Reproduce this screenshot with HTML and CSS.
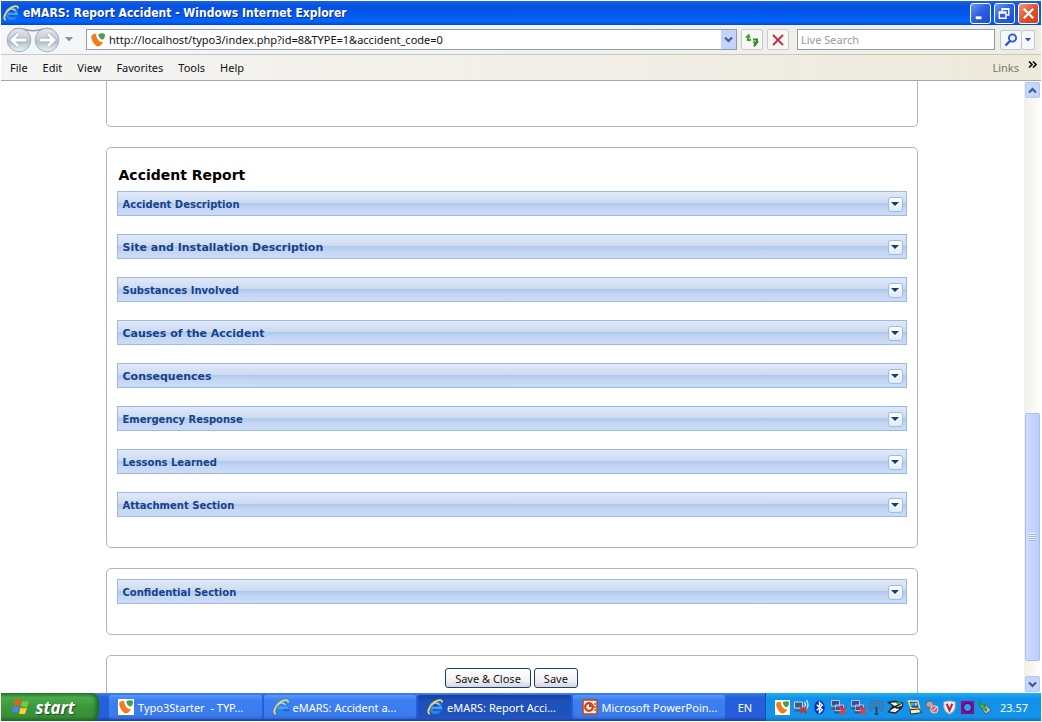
FILE: index.html
```html
<!DOCTYPE html>
<html lang="en">
<head>
<meta charset="utf-8">
<title>eMARS: Report Accident</title>
<link rel="stylesheet" href="styles.css">
</head>
<body>
<svg class="defs" aria-hidden="true">
  <defs>
    <linearGradient id="orb" x1="0" y1="0" x2="0" y2="1"><stop offset="0" stop-color="#e4e8ec"/><stop offset=".45" stop-color="#c6ced7"/><stop offset=".6" stop-color="#b4c2cf"/><stop offset="1" stop-color="#e2fafd"/></linearGradient>
    <symbol id="ie" viewBox="0 0 16 16">
      <circle cx="8.500" cy="8.500" r="5" fill="none" stroke="#2a86e2" stroke-width="3.200"/>
      <path d="M4.500 6.500A4.600 4.600 0 0 1 12.500 6" fill="none" stroke="#8ad4ff" stroke-width="1.500"/>
      <path d="M5 8.800h10" stroke="#4aa6f4" stroke-width="2.200"/>
      <path d="M10.500 10h6v2.200h-6z" fill="#1c62e0"/>
      <path d="M2.800 15C-.6 14 2.200 6.500 7.500 3c3.500-2.400 8-2.800 7.500.5" fill="none" stroke="#f6d75c" stroke-width="1.800"/>
    </symbol>
    <symbol id="typo" viewBox="0 0 16 16">
      <path d="M0 0h16v16H0z" fill="#fff"/>
      <path d="M2.500 2.500C.8 3.500.8 5.500 2 8c1.500 3.500 3.800 6.500 6 6.500 2.200 0 4.200-2.200 5-4.700C9.500 11 6.300 6.500 6 1.500z" fill="#f57c1c"/>
      <path d="M8.500 2c2-.8 6-1 6.300.2.500 1.700-.2 4.300-1.800 5.300C10.800 8 8 4.500 8.500 2z" fill="#4f9b52"/>
    </symbol>
    <symbol id="net" viewBox="0 0 16 16">
      <path d="M1 1.500h8v5.500H1zM5 6h8v5.500H5z" fill="#3c4f96" stroke="#b9c4dc"/>
      <path d="M1 9.500h4M4 13.500h6" stroke="#46506e" stroke-width="2"/>
      <path d="M9 8l6 7M15 8l-6 7" stroke="#e8383c" stroke-width="2.400"/>
    </symbol>
  </defs>
</svg>

<header class="titlebar">
  <svg class="icon16"><use href="#ie"/></svg>
  <h1 class="window-title">eMARS: Report Accident - Windows Internet Explorer</h1>
  <div class="window-buttons">
    <button class="winbtn" aria-label="Minimize"><svg viewBox="0 0 20 20"><path d="M5 14.500h6" stroke="#fff" stroke-width="3"/></svg></button>
    <button class="winbtn" aria-label="Restore"><svg viewBox="0 0 20 20"><path d="M7.500 8V5h7v6.500H12M7 5.500h8" fill="none" stroke="#fff" stroke-width="1.500"/><path d="M4.500 8.500h7v6.500h-7zM4 9.500h8" fill="none" stroke="#fff" stroke-width="1.500"/></svg></button>
    <button class="winbtn winbtn-close" aria-label="Close"><svg viewBox="0 0 20 20"><path d="M5 5l10 10M15 5L5 15" stroke="#fff" stroke-width="2.400"/></svg></button>
  </div>
</header>

<div class="navbar">
  <button class="orb-pair" aria-label="Back and forward">
    <svg viewBox="0 0 56 26" width="56" height="26">
      <path d="M8 3q4-2.500 10-1 10 3.500 20 0 6-1.500 10 1" fill="none" stroke="#8f9aa6" stroke-width="1.500"/>
      <circle cx="14" cy="13" r="11.800" fill="url(#orb)" stroke="#a3adb8"/>
      <circle cx="42" cy="13" r="11.800" fill="url(#orb)" stroke="#a3adb8"/>
      <path d="M13 7l-6 6 6 6M8 13h13M43 7l6 6-6 6M48 13H35" fill="none" stroke="#9fabb8" stroke-width="4.500"/>
      <path d="M13 7l-6 6 6 6M8 13h13M43 7l6 6-6 6M48 13H35" fill="none" stroke="#fff" stroke-width="2.800"/>
    </svg>
  </button>
  <button class="history" aria-label="Recent pages"><svg viewBox="0 0 8 5" width="8" height="5"><path d="M0 0h8L4 4.500z" fill="#8d9298"/></svg></button>
  <div class="address">
    <svg class="icon16"><use href="#typo"/></svg>
    <input class="address-input" aria-label="Address" value="http://localhost/typo3/index.php?id=8&amp;TYPE=1&amp;accident_code=0">
    <button class="drop" aria-label="Show addresses"><svg viewBox="0 0 9 7" width="9" height="7"><path d="M1 1.500l3.500 3.500L8 1.500" fill="none" stroke="#45608f" stroke-width="2.200"/></svg></button>
  </div>
  <button class="toolbtn" aria-label="Refresh"><svg viewBox="0 0 16 16" width="16" height="16"><path d="M1 5.500L5 1.500 6.500 6z" fill="#36a03a"/><path d="M4 4v4h3" fill="none" stroke="#36a03a" stroke-width="2.200"/><path d="M15 9.500L11.500 14 8.500 9.500z" fill="#2c8a34"/><path d="M9 7.500h4v3M11.500 12l-1.500 2.500" fill="none" stroke="#2c8a34" stroke-width="2"/></svg></button>
  <button class="toolbtn" aria-label="Stop"><svg viewBox="0 0 14 14" width="14" height="14"><path d="M2 2l10 10M12 2L2 12" stroke="#c02c40" stroke-width="1.800"/></svg></button>
  <input class="search" aria-label="Live Search" placeholder="Live Search">
  <div class="search-buttons">
    <button class="split" aria-label="Search"><svg viewBox="0 0 14 14" width="14" height="14"><circle cx="8.500" cy="5" r="3.600" fill="#e3efff" stroke="#2a56c6" stroke-width="1.800"/><path d="M6 8l-4.500 4.500" stroke="#2a56c6" stroke-width="2.400"/></svg></button>
    <button class="split split-drop" aria-label="Search options"><svg viewBox="0 0 6 4" width="6" height="4"><path d="M0 0h6L3 3.500z" fill="#2a56a6"/></svg></button>
  </div>
</div>

<nav class="menubar">
  <button class="menu">File</button>
  <button class="menu">Edit</button>
  <button class="menu">View</button>
  <button class="menu">Favorites</button>
  <button class="menu">Tools</button>
  <button class="menu">Help</button>
  <span class="links">Links</span>
  <button class="more" aria-label="More links"><svg viewBox="0 0 9 7" width="9" height="7"><path d="M1 .5l3 3-3 3M5 .5l3 3-3 3" fill="none" stroke="#111" stroke-width="1.700"/></svg></button>
</nav>

<div class="viewport">
  <main class="page">
    <section class="card card-tail"></section>

    <section class="card">
      <h2 class="card-title">Accident Report</h2>
      <div class="panels">
        <div class="panel"><h3 class="panel-title">Accident Description</h3><button class="toggle" aria-label="Expand Accident Description"></button></div>
        <div class="panel"><h3 class="panel-title panel-title-wide">Site and Installation Description</h3><button class="toggle" aria-label="Expand Site and Installation Description"></button></div>
        <div class="panel"><h3 class="panel-title">Substances Involved</h3><button class="toggle" aria-label="Expand Substances Involved"></button></div>
        <div class="panel"><h3 class="panel-title panel-title-wide">Causes of the Accident</h3><button class="toggle" aria-label="Expand Causes of the Accident"></button></div>
        <div class="panel"><h3 class="panel-title panel-title-wide">Consequences</h3><button class="toggle" aria-label="Expand Consequences"></button></div>
        <div class="panel"><h3 class="panel-title">Emergency Response</h3><button class="toggle" aria-label="Expand Emergency Response"></button></div>
        <div class="panel"><h3 class="panel-title">Lessons Learned</h3><button class="toggle" aria-label="Expand Lessons Learned"></button></div>
        <div class="panel"><h3 class="panel-title">Attachment Section</h3><button class="toggle" aria-label="Expand Attachment Section"></button></div>
      </div>
    </section>

    <section class="card">
      <div class="panel"><h3 class="panel-title">Confidential Section</h3><button class="toggle" aria-label="Expand Confidential Section"></button></div>
    </section>

    <section class="card card-actions">
      <button class="action">Save &amp; Close</button>
      <button class="action">Save</button>
    </section>
  </main>

  <div class="scrollbar">
    <button class="scroll-arrow" aria-label="Scroll up"><svg viewBox="0 0 9 7" width="9" height="7"><path d="M1 5.500L4.500 2 8 5.500" fill="none" stroke="#3f5a91" stroke-width="2.200"/></svg></button>
    <div class="scroll-track"><div class="scroll-thumb"><span class="grip"></span></div></div>
    <button class="scroll-arrow" aria-label="Scroll down"><svg viewBox="0 0 9 7" width="9" height="7"><path d="M1 1.500L4.500 5 8 1.500" fill="none" stroke="#3f5a91" stroke-width="2.200"/></svg></button>
  </div>
</div>

<footer class="taskbar">
  <button class="start">
    <svg viewBox="0 0 20 18" width="20" height="18">
      <path d="M4 2q3-1.500 6 .3L8.500 8q-3-1.500-6 0z" fill="#ee5a28"/>
      <path d="M11 2.800q3 1.500 7 .2l-1.700 5.500q-3 1.200-6.500-.2z" fill="#7cc83c"/>
      <path d="M2.200 9q3-1.500 6 0l-1.600 6q-3-1.500-6 0z" fill="#4a86ee"/>
      <path d="M9.500 9.400q3 1.500 6.500.2l-1.700 6q-3.200 1.200-6.400-.2z" fill="#fbcf38"/>
    </svg>
    <span>start</span>
  </button>
  <div class="tasks">
    <button class="task"><svg class="icon16"><use href="#typo"/></svg><span>Typo3Starter&nbsp; - TYP...</span></button>
    <button class="task"><svg class="icon16"><use href="#ie"/></svg><span>eMARS: Accident a...</span></button>
    <button class="task task-active"><svg class="icon16"><use href="#ie"/></svg><span>eMARS: Report Acci...</span></button>
    <button class="task"><svg class="icon16" viewBox="0 0 16 16"><path d="M1 1h14v14H1z" fill="#fff2e4" stroke="#b8431d" stroke-width="1.500"/><circle cx="7" cy="8" r="3.800" fill="none" stroke="#c8401a" stroke-width="2.200"/><path d="M7 8V4l4 4z" fill="#b8431d"/><path d="M13 4v9" stroke="#c8501c" stroke-width="1.500" stroke-dasharray="2 1"/></svg><span>Microsoft PowerPoin...</span></button>
  </div>
  <button class="lang">EN</button>
  <div class="tray">
    <svg class="tray-icon"><use href="#typo"/></svg>
    <svg class="tray-icon tray-wide" viewBox="0 0 16 16"><path d="M1 3h8v6H1z" fill="#4a5878" stroke="#ccd6e8"/><path d="M1 11.500h8" stroke="#50586e" stroke-width="2"/><path d="M11 3q2 3 0 6M13 1q3 5 0 9" fill="none" stroke="#e4eefa" stroke-width="1.300"/><path d="M7 8l6 6M13 8l-6 6" stroke="#d02c2c" stroke-width="2"/></svg>
    <svg class="tray-icon" viewBox="0 0 16 16"><ellipse cx="8" cy="8" rx="5.500" ry="7.500" fill="#0a2cc0"/><path d="M5 5l6 5.500L8 13.500V2.500l3 3L5 11" fill="none" stroke="#fff" stroke-width="1.500"/></svg>
    <svg class="tray-icon tray-wide"><use href="#net"/></svg>
    <svg class="tray-icon tray-wide"><use href="#net"/></svg>
    <svg class="tray-icon" viewBox="0 0 16 16"><path d="M3 12A7 7 0 1 1 13 12M5.500 9.500A3.500 3.500 0 1 1 10.500 9.500" fill="none" stroke="#5a6c88" stroke-width="1.500"/><path d="M8 7v8M6 15h4" stroke="#26405e" stroke-width="2"/></svg>
    <svg class="tray-icon tray-wide" viewBox="0 0 16 16"><path d="M1 3.500l6-1 8 1.500v3l-6 2zM1 13l4-5 9 1-6 5z" fill="#f4f4f0" stroke="#222" stroke-width="1.300"/><path d="M3 10l10-5" stroke="#222" stroke-width="1.500"/><path d="M9 4h4" stroke="#35a03f" stroke-width="2"/></svg>
    <svg class="tray-icon" viewBox="0 0 16 16"><path d="M1.500 1h10l2 8h-9z" fill="#3046b0" stroke="#f0e67c" stroke-width="1.500"/><path d="M4 3h3v3H4z" fill="#58c65a"/><path d="M8 3h3v3H8z" fill="#8ad6f1"/><path d="M3 10.500l10-1 2.500 4-11.500 1.500z" fill="#f3eec4" stroke="#222"/></svg>
    <svg class="tray-icon" viewBox="0 0 16 16"><circle cx="6" cy="5" r="4" fill="#b5aaa5" stroke="#6e5555"/><path d="M3 8q6-1 7 6" fill="none" stroke="#866" stroke-width="2"/><circle cx="11" cy="10" r="4" fill="#c87068" stroke="#f3dad5"/><path d="M9 12l5-5" stroke="#fff"/></svg>
    <svg class="tray-icon" viewBox="0 0 16 16"><path d="M2 2q6-2 12 0v6q-1 5-6 7-5-2-6-7z" fill="#f4f2f4" stroke="#aaa"/><path d="M5 4l3 7 3-7" fill="none" stroke="#d0202c" stroke-width="2.200"/></svg>
    <svg class="tray-icon" viewBox="0 0 16 16"><path d="M1 1h14v14H1z" fill="#84108c"/><circle cx="8" cy="8" r="4.500" fill="#2a9ef0" stroke="#5a0a70" stroke-width="1.500"/></svg>
    <svg class="tray-icon" viewBox="0 0 16 16"><path d="M4 8l6-2 5 5-6 4z" fill="#b9c6c4" stroke="#456"/><path d="M2 1l2 7 6 4v-3L7 7l2-3-4 1z" fill="#4cc048" stroke="#248627"/></svg>
    <span class="clock">23.57</span>
  </div>
</footer>
</body>
</html>
```
FILE: styles.css
```css
* { box-sizing: border-box; }

body {
  margin: 0;
  height: 100vh;
  padding: 1px;
  display: flex;
  flex-direction: column;
  background: #fff;
  color: #111;
  font: 11px "Noto Sans", Tahoma, sans-serif;
  overflow: hidden;
}

button, input { font: inherit; color: inherit; margin: 0; padding: 0; }
button { border: 0; background: none; display: flex; align-items: center; justify-content: center; }
h1, h2, h3 { margin: 0; }

.defs { position: absolute; width: 0; height: 0; }
.icon16 { width: 16px; height: 16px; flex: none; }

.titlebar {
  height: 24px;
  flex: none;
  display: flex;
  align-items: center;
  gap: 4px;
  padding: 0 2px;
  background: linear-gradient(#1c62e2, #0550e0 20%, #0458ee 55%, #0565fb 85%, #0347c8);
}
.window-title {
  flex: 1;
  font: bold 12px "DejaVu Sans Condensed", "Noto Sans", sans-serif;
  color: #fff;
  text-shadow: 1px 1px #0a2c86;
}
.window-buttons { display: flex; gap: 3px; }
.winbtn {
  width: 21px;
  height: 21px;
  border: 1px solid #fff;
  border-radius: 3px;
  background: linear-gradient(135deg, #6c96f4, #2a5ee0 50%, #1c4fd0);
}
.winbtn-close { background: linear-gradient(135deg, #f09a80, #e2512c 50%, #d03c14); }

.navbar {
  height: 30px;
  flex: none;
  display: flex;
  align-items: center;
  padding: 0 6px 0 4px;
  background: linear-gradient(90deg, #f5f6f8, #efede2);
  border-bottom: 1px solid #c9c8c0;
}
.orb-pair { width: 56px; height: 26px; }
.history { width: 16px; height: 20px; margin-right: 9px; }
.address {
  flex: 1;
  height: 21px;
  display: flex;
  align-items: center;
  gap: 3px;
  padding-left: 3px;
  background: #fff;
  border: 1px solid #8d9db5;
}
.address-input { flex: 1; min-width: 0; border: 0; outline: 0; background: none; }
.drop { width: 15px; height: 19px; background: #c3d3fb; }
.toolbtn {
  width: 22px;
  height: 21px;
  margin-left: 4px;
  border: 1px solid #c3ccd6;
  border-radius: 2px;
  background: #f7f7f3;
}
.search {
  width: 198px;
  height: 21px;
  margin-left: 8px;
  padding: 0 3px;
  border: 1px solid #8d9db5;
  background: #fff;
}
.search::placeholder { color: #999; opacity: 1; }
.search-buttons { display: flex; margin-left: 5px; }
.split { width: 22px; height: 20px; border: 1px solid #b8c6dc; border-radius: 2px; background: #f6f8fb; }
.split-drop { width: 13px; border-left: 0; }

.menubar {
  height: 26px;
  flex: none;
  display: flex;
  align-items: center;
  gap: 15px;
  padding: 0 4px 0 9px;
  background: linear-gradient(90deg, #f4f4f4, #edeadb);
  border-bottom: 1px solid #aaa99f;
}
.links { margin-left: auto; color: #77766e; }
.more { align-self: flex-start; margin: 6px 0 0 -6px; }

.viewport { flex: 1; min-height: 0; display: flex; overflow: hidden; }
.page {
  flex: 1;
  min-width: 0;
  overflow: hidden;
  display: flex;
  flex-direction: column;
  align-items: center;
  gap: 20px;
  padding-right: 2px;
}
.card {
  width: 812px;
  max-width: 94%;
  flex: none;
  padding: 10px 10px 30px;
  border: 1px solid #b4b4b4;
  border-radius: 5px;
}
.card-tail { height: 46px; border-top: 0; border-radius: 0 0 5px 5px; }
.card-title {
  padding: 7px 2px 6px;
  font: bold 14px/20px "DejaVu Sans", Verdana, sans-serif;
  color: #000;
}
.panels { display: flex; flex-direction: column; gap: 18px; }
.panel {
  height: 25px;
  display: flex;
  align-items: center;
  justify-content: space-between;
  padding: 1px 3px 0 5px;
  border: 1px solid #99bbe8;
  background: linear-gradient(#e0e9f8, #cbdaf2 48%, #b2c9ec 50%, #c3d6f3 70%, #ccdcf7);
}
.panel-title { font: bold 10px "DejaVu Sans", Verdana, sans-serif; color: #15428b; }
.panel-title-wide { font-size: 11px; }
.toggle {
  width: 15px;
  height: 15px;
  border: 1px solid #9dbde0;
  border-radius: 3px;
  background: linear-gradient(#fff, #dcebfb);
}
.toggle::before {
  content: "";
  border: 4px solid transparent;
  border-top-color: #183a70;
  border-bottom: 0;
}
.card-actions { display: flex; justify-content: center; align-items: flex-start; gap: 3px; padding-top: 12px; height: 70px; }
.action {
  height: 20px;
  padding: 0 9px;
  border: 1px solid #1d3f70;
  border-radius: 3px;
  background: linear-gradient(#fff, #f2f2f5 60%, #d5d5e0);
}

.scrollbar {
  width: 17px;
  flex: none;
  display: flex;
  flex-direction: column;
  padding: 1px;
  background: linear-gradient(90deg, #f1f0ea, #fefefb);
}
.scroll-arrow { width: 15px; height: 16px; flex: none; border-radius: 2px; background: #c6d5fc; border: 1px solid #b4c6f2; }
.scroll-track { flex: 1; display: flex; flex-direction: column; justify-content: flex-end; padding-bottom: 15px; }
.scroll-thumb {
  height: 44%;
  display: flex;
  align-items: center;
  justify-content: center;
  border: 1px solid #a9bdf0;
  border-radius: 2px;
  background: linear-gradient(90deg, #cfdcfd, #bccdfb);
}
.grip { width: 7px; height: 8px; background: repeating-linear-gradient(#edf3ff 0 1px, #9fb5ee 1px 2px); }

.taskbar {
  height: 28px;
  flex: none;
  display: flex;
  color: #fff;
  background: linear-gradient(#3d83ee, #2560dc 15%, #245edb 85%, #1941a5);
}
.start {
  width: 98px;
  flex: none;
  gap: 4px;
  padding-right: 14px;
  border-radius: 0 8px 8px 0;
  background: linear-gradient(#2d7d2f, #4bab4b 15%, #3a983a 50%, #358f35 85%, #246a25);
  box-shadow: inset -3px 0 4px #1f6423;
  font: italic bold 17px "Open Sans", "Noto Sans", sans-serif;
  text-shadow: 1px 1px 1px #1a4d1c;
}
.tasks { flex: 1; min-width: 0; display: flex; gap: 2px; padding: 2px 0 2px 10px; }
.task {
  flex: 1;
  min-width: 0;
  justify-content: flex-start;
  gap: 4px;
  padding-left: 9px;
  border-radius: 2px;
  white-space: nowrap;
  background: linear-gradient(#5a98fb, #3c80f2 20%, #3a7bee 85%, #2d66d4);
}
.task-active { background: linear-gradient(#143f9e, #1e50b8 25%, #2053c0); }
.lang { width: 40px; flex: none; }
.tray {
  flex: none;
  width: 276px;
  display: flex;
  align-items: center;
  justify-content: space-between;
  padding: 0 13px 0 9px;
  border-left: 1px solid #0d4db0;
  background: linear-gradient(#1cb0f4, #1290e8 20%, #1394ea 85%, #0e70c4);
}
.tray-icon { width: 15px; height: 15px; flex: none; }
.tray-wide { width: 17px; height: 16px; }
.clock { padding-left: 5px; }
```
